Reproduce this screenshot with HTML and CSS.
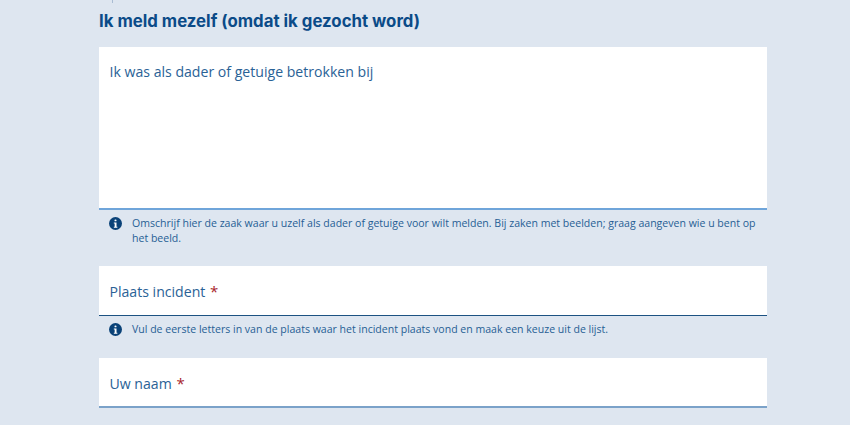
FILE: index.html
```html
<!DOCTYPE html>
<html lang="nl">
<head>
  <meta charset="UTF-8">
  <meta name="viewport" content="width=device-width, initial-scale=1">
  <title>Ik meld mezelf</title>
  <link rel="stylesheet" href="styles.css">
</head>
<body>
  <main class="form">
    <div class="crumb"></div>
    <h1>Ik meld mezelf (omdat ik gezocht word)</h1>

    <div class="field area">Ik was als dader of getuige betrokken bij</div>
    <div class="hint two-lines">
      <svg class="info" viewBox="0 0 14 14"><circle cx="7" cy="7" r="7"/><rect class="dot" x="5.9" y="2.6" width="2.2" height="2.1" rx="1"/><path class="dot" d="M5.2 5.9h2.9v4.6h.9v1.1H5.2v-1.1h.9V7H5.2z"/></svg>
      <p>Omschrijf hier de zaak waar u uzelf als dader of getuige voor wilt melden. Bij zaken met beelden; graag aangeven wie u bent op het beeld.</p>
    </div>

    <div class="field active">Plaats incident <span class="req">*</span></div>
    <div class="hint">
      <svg class="info" viewBox="0 0 14 14"><circle cx="7" cy="7" r="7"/><rect class="dot" x="5.9" y="2.6" width="2.2" height="2.1" rx="1"/><path class="dot" d="M5.2 5.9h2.9v4.6h.9v1.1H5.2v-1.1h.9V7H5.2z"/></svg>
      <p>Vul de eerste letters in van de plaats waar het incident plaats vond en maak een keuze uit de lijst.</p>
    </div>

    <div class="field">Uw naam <span class="req">*</span></div>
  </main>
</body>
</html>
```

FILE: styles.css
```css
html {
  height: 100%;
}
body {
  background: #dee6f0;
  color: #0f4f8a;
  font-family: "Open Sans", Arial, sans-serif;
  margin: 0;
  height: 425px;
  overflow: hidden;
}
.form {
  width: 668px;
  margin-left: 99px;
}
.crumb {
  width: 1px;
  height: 3px;
  margin-left: 13px;
  background: #a9bcd3;
}
h1 {
  font-family: Inter, Arial, sans-serif;
  font-size: 16.8px;
  font-weight: 700;
  line-height: 20px;
  color: #0b4b88;
  margin: 8px 0 16px 0;
}
.field {
  background: white;
  font-size: 14.1px;
  line-height: 20px;
  color: #2a6296;
  padding: 15px 11px 0 10.5px;
  height: 33px;
  border-bottom: 2px solid #7ba2c9;
}
.area {
  height: 146px;
  border-bottom-color: #6fa5da;
}
.active {
  border-bottom: 1px solid #1c5282;
  height: 34px;
}
.req {
  color: #a8232b;
  font-size: 15px;
  margin-left: 1px;
}
.hint {
  display: flex;
  gap: 10px;
  padding: 6px 10px 0 10px;
  height: 36px;
  font-size: 10.56px;
  line-height: 15px;
  color: #265e94;
}
.two-lines {
  height: 50px;
}
.hint p {
  margin: 0;
}
.info {
  flex: none;
  width: 13px;
  height: 13px;
  margin-top: 1px;
  fill: #0a4278;
}
.dot {
  fill: white;
}
```
